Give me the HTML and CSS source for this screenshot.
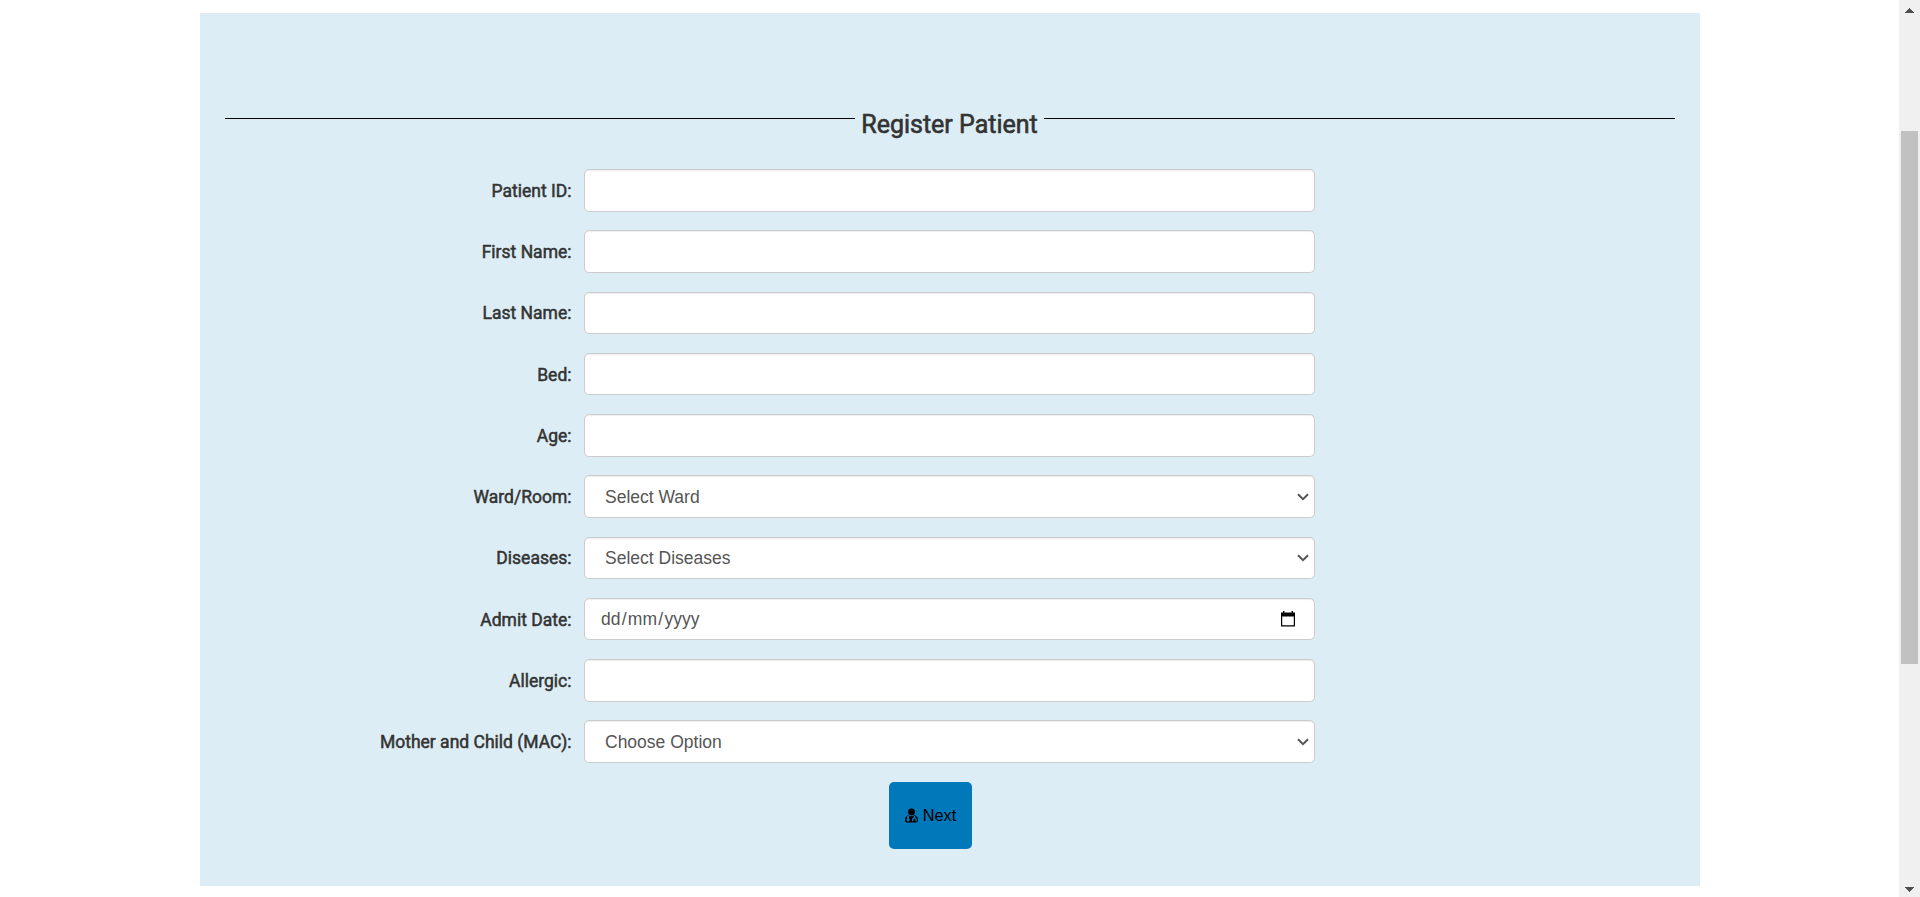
FILE: index.html
```html
<!DOCTYPE html>
<html lang="en">
<head>
<meta charset="utf-8">
<title>Register Patient</title>
<link rel="stylesheet" href="styles.css">
</head>
<body>
<main class="page">
  <form class="panel">
    <div class="heading"><span class="rule"></span><h1 class="title">Register Patient</h1><span class="rule rule-end"></span></div>
    <div class="row"><label class="label" for="pid">Patient ID:</label><input class="field" id="pid" type="text"></div>
    <div class="row"><label class="label" for="fname">First Name:</label><input class="field" id="fname" type="text"></div>
    <div class="row"><label class="label" for="lname">Last Name:</label><input class="field" id="lname" type="text"></div>
    <div class="row"><label class="label" for="bed">Bed:</label><input class="field" id="bed" type="text"></div>
    <div class="row"><label class="label" for="age">Age:</label><input class="field" id="age" type="text"></div>
    <div class="row"><span class="label">Ward/Room:</span><div class="field select"><span>Select Ward</span><svg class="chevron" viewBox="0 0 12 8"><path d="M1 1.2l5 5 5-5"/></svg></div></div>
    <div class="row"><span class="label">Diseases:</span><div class="field select"><span>Select Diseases</span><svg class="chevron" viewBox="0 0 12 8"><path d="M1 1.2l5 5 5-5"/></svg></div></div>
    <div class="row"><span class="label">Admit Date:</span><div class="field date"><span class="date-text"><span>dd</span><span>/</span><span>mm</span><span>/</span><span>yyyy</span></span><svg class="calendar" viewBox="0 0 14 16"><path d="M0 1.5h2V0h1.4v1.5h7.2V0H12v1.5h2V15.5H0zM1.2 5.5v8.8h11.6V5.5z" fill-rule="evenodd"/></svg></div></div>
    <div class="row"><label class="label" for="allergic">Allergic:</label><input class="field" id="allergic" type="text"></div>
    <div class="row"><span class="label">Mother and Child (MAC):</span><div class="field select"><span>Choose Option</span><svg class="chevron" viewBox="0 0 12 8"><path d="M1 1.2l5 5 5-5"/></svg></div></div>
    <button class="next" type="button"><svg class="doctor" viewBox="0 0 13 15"><circle cx="6.5" cy="3.9" r="3.4"/><path fill-rule="evenodd" d="M3.2 7.2Q6.5 9.3 9.8 7.2Q13 8.3 13 12.3Q13 14.6 10.8 14.6H2.2Q0 14.6 0 12.3Q0 8.3 3.2 7.2zM2.1 7.8V10.4A1.6 1.6 0 1 0 4 10.4V7.8L3 8.1zM8.7 7.9V9.2Q7 9.7 7 11.6V13.3H8.4V11.6Q8.4 10.5 9.4 10.5T10.4 11.6V13.3H11.8V11.6Q11.8 9.7 10.1 9.2V7.9z"/></svg><span>Next</span></button>
  </form>
</main>
<aside class="scrollbar" aria-hidden="true">
  <svg class="arrow" viewBox="0 0 9 5" shape-rendering="crispEdges"><path d="M4 0h1v1h1v1h1v1h1v1h1v1H0V4h1V3h1V2h1V1h1z"/></svg>
  <div class="thumb"></div>
  <svg class="arrow" viewBox="0 0 9 5" shape-rendering="crispEdges"><path d="M0 0h9v1H8v1H7v1H6v1H5v1H4V4H3V3H2V2H1V1H0z"/></svg>
</aside>
</body>
</html>
```
FILE: styles.css
```css
* { box-sizing: border-box; }
body { margin: 0; display: flex; height: 897px; overflow: hidden; background: #fff; color: #333; font-family: Roboto, sans-serif; }
.page { flex: 1; padding: 13px 199px 0 200px; }
.panel { height: 873px; padding: 92px 25px 0; background: #dcedf5; }
.heading { display: flex; align-items: flex-start; height: 64px; }
.rule { width: 630px; height: 1px; margin-top: 13px; background: #000; }
.rule-end { width: auto; flex: 1; }
.title { width: 189px; margin: 0; text-align: center; white-space: nowrap; font-size: 25px; line-height: 40px; font-weight: 400; -webkit-text-stroke: 0.6px #333; }
.row { display: flex; align-items: center; height: 42.5px; margin-bottom: 18.75px; }
.label { width: 346.5px; margin-right: 12.5px; text-align: right; font-size: 17.5px; line-height: 25px; font-weight: 400; -webkit-text-stroke: 0.5px #333; padding-top: 2px; }
.field { display: flex; align-items: center; width: 731px; height: 42.5px; padding: 0 16px; border: 1px solid #ccc; border-radius: 5px; background: #fff; box-shadow: inset 0 1px 1px rgba(0,0,0,.075); color: #555; font: 17.5px/25px "Liberation Sans", Arial, sans-serif; }
.select { justify-content: space-between; padding: 0 5px 0 20px; }
.select span { padding-top: 1px; }
.chevron { width: 12px; height: 8px; fill: none; stroke: #555; stroke-width: 2; }
.date { justify-content: space-between; padding-right: 19.5px; }
.date-text { display: flex; gap: 1.25px; }
.calendar { width: 14px; height: 16px; margin-top: -1px; fill: #000; }
.next { display: flex; align-items: center; justify-content: center; gap: 5px; width: 83px; height: 67px; margin: 0 0 0 664px; padding: 0; border: 0; border-radius: 5px; background: #0078b9; color: #000; font: 16.25px/24px "Liberation Sans", Arial, sans-serif; }
.doctor { width: 13px; height: 15px; }
.scrollbar { display: flex; flex-direction: column; align-items: center; width: 21px; padding: 8px 0 5px; background: #f0f0f0; }
.arrow { width: 9px; height: 5px; fill: #505050; }
.thumb { width: 17px; height: 533px; margin: 118px 0 223px; background: #c1c1c1; }
```
